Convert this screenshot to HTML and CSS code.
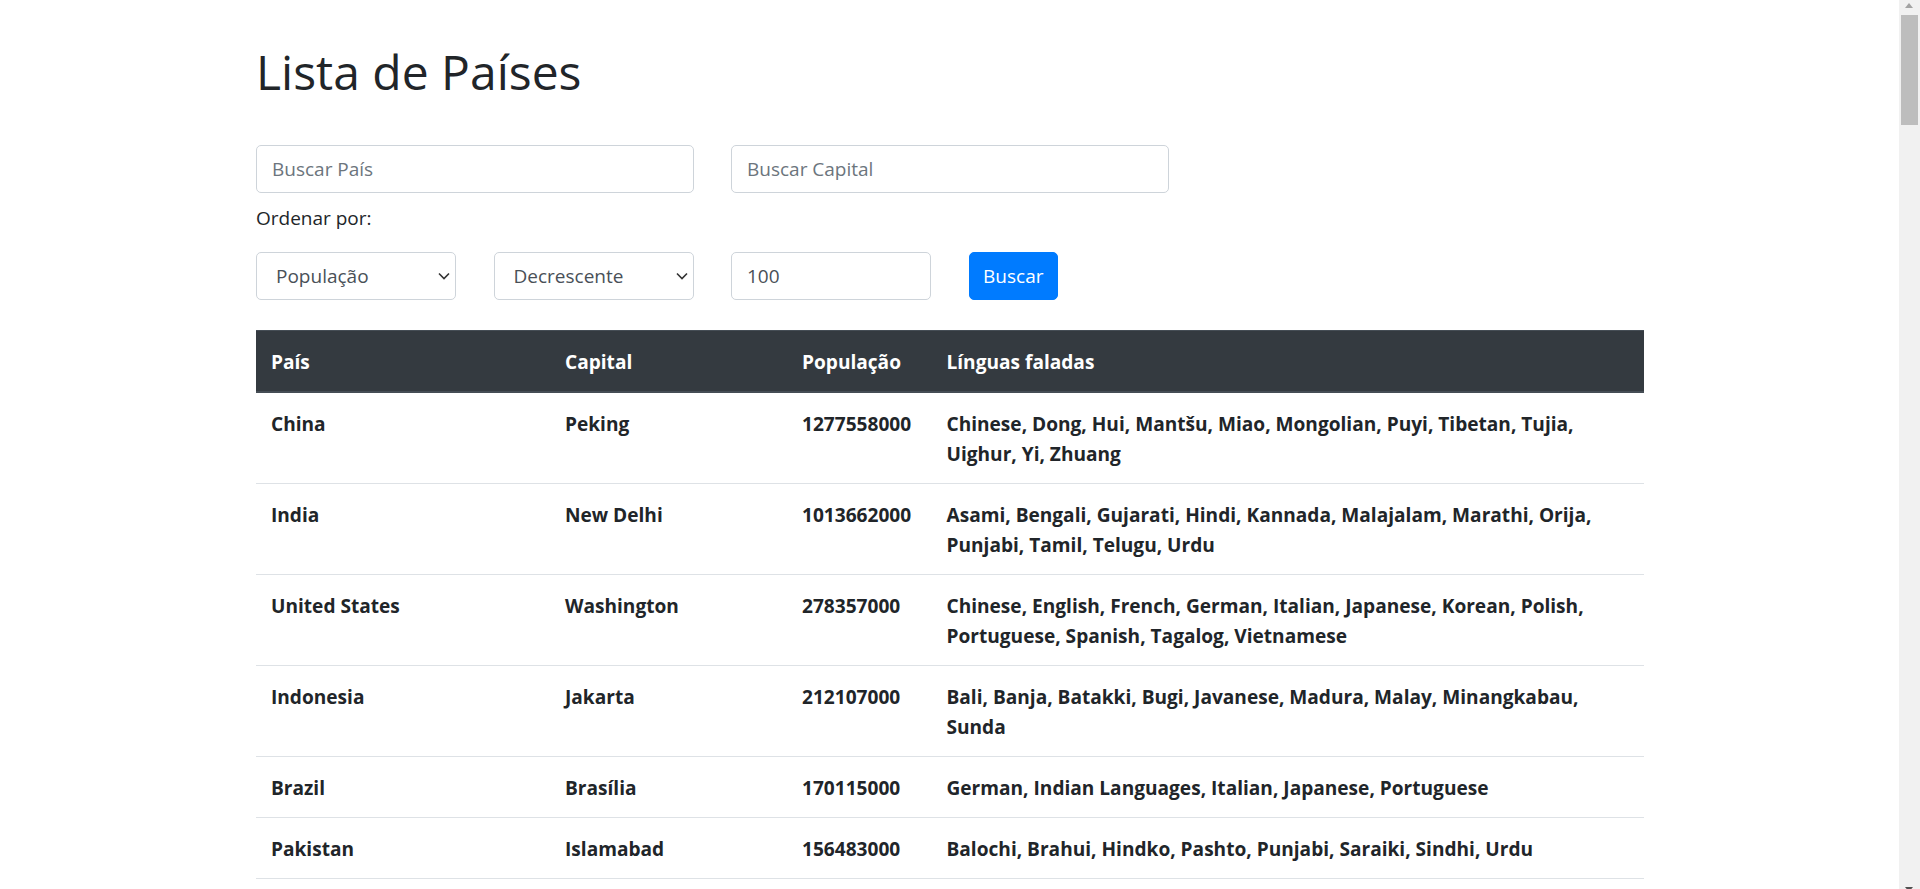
FILE: index.html
```html
<!DOCTYPE html>
<html lang="pt">
<head>
<meta charset="utf-8">
<title>Lista de Países</title>
<link rel="stylesheet" href="styles.css">
</head>
<body>
<div class="container">
  <h1 class="title">Lista de Países</h1>
  <div class="row row-search">
    <div class="col col-4"><input class="form-control" type="text" placeholder="Buscar País"></div>
    <div class="col col-4"><input class="form-control" type="text" placeholder="Buscar Capital"></div>
  </div>
  <label class="order-label">Ordenar por:</label>
  <div class="row row-order">
    <div class="col col-2">
      <div class="select-wrap">
        <select class="form-control form-select"><option>População</option></select>
        <svg class="chev" width="12" height="8" viewBox="0 0 12 8"><path d="M1 1.5 L6 6.5 L11 1.5" fill="none" stroke="#333" stroke-width="1.6"/></svg>
      </div>
    </div>
    <div class="col col-2">
      <div class="select-wrap">
        <select class="form-control form-select"><option>Decrescente</option></select>
        <svg class="chev" width="12" height="8" viewBox="0 0 12 8"><path d="M1 1.5 L6 6.5 L11 1.5" fill="none" stroke="#333" stroke-width="1.6"/></svg>
      </div>
    </div>
    <div class="col col-2"><input class="form-control" type="number" value="100"></div>
    <div class="col col-2"><button class="btn">Buscar</button></div>
  </div>
  <table class="table">
    <colgroup>
      <col class="c1"><col class="c2"><col class="c3"><col class="c4">
    </colgroup>
    <thead>
      <tr><th>País</th><th>Capital</th><th>População</th><th class="langs">Línguas faladas</th></tr>
    </thead>
    <tbody>
      <tr><td>China</td><td>Peking</td><td>1277558000</td><td class="langs">Chinese, Dong, Hui, Mantšu, Miao, Mongolian, Puyi, Tibetan, Tujia, Uighur, Yi, Zhuang</td></tr>
      <tr><td>India</td><td>New Delhi</td><td>1013662000</td><td class="langs">Asami, Bengali, Gujarati, Hindi, Kannada, Malajalam, Marathi, Orija, Punjabi, Tamil, Telugu, Urdu</td></tr>
      <tr><td>United States</td><td>Washington</td><td>278357000</td><td class="langs">Chinese, English, French, German, Italian, Japanese, Korean, Polish, Portuguese, Spanish, Tagalog, Vietnamese</td></tr>
      <tr><td>Indonesia</td><td>Jakarta</td><td>212107000</td><td class="langs">Bali, Banja, Batakki, Bugi, Javanese, Madura, Malay, Minangkabau, Sunda</td></tr>
      <tr><td>Brazil</td><td>Brasília</td><td>170115000</td><td class="langs">German, Indian Languages, Italian, Japanese, Portuguese</td></tr>
      <tr><td>Pakistan</td><td>Islamabad</td><td>156483000</td><td class="langs">Balochi, Brahui, Hindko, Pashto, Punjabi, Saraiki, Sindhi, Urdu</td></tr>
    </tbody>
  </table>
</div>
<div class="scrollbar">
  <span class="sb-up"></span>
  <span class="sb-thumb"></span>
  <span class="sb-down"></span>
</div>
</body>
</html>
```
FILE: styles.css
```css
html, body {
  margin: 0;
  padding: 0;
  background: #fff;
}
body {
  font-family: "Open Sans", "Noto Sans", sans-serif;
  font-size: 19px;
  line-height: 30px;
  color: #212529;
}
.container {
  margin-left: 256px;
  width: 1387.5px;
  padding-top: 42px;
}
.title {
  margin: 0 0 43px;
  font-size: 48px;
  font-weight: 500;
  line-height: 60px;
  color: #212529;
}
.row {
  display: flex;
  gap: 37.5px;
}
.col-4 { width: 437.5px; }
.col-2 { width: 200px; }
.row-search { margin-bottom: 10px; }
.order-label {
  display: block;
  margin-bottom: 19.5px;
}
.row-order { margin-bottom: 30.5px; }
.form-control {
  display: block;
  box-sizing: border-box;
  width: 100%;
  height: 47.5px;
  margin: 0;
  padding: 9px 15px;
  font-family: "Open Sans", "Noto Sans", sans-serif;
  font-size: 19px;
  line-height: 28px;
  color: #495057;
  background: #fff;
  border: 1px solid #ced4da;
  border-radius: 5px;
  outline: none;
}
.form-control::placeholder { color: #6c757d; opacity: 1; }
input[type=number]::-webkit-inner-spin-button,
input[type=number]::-webkit-outer-spin-button { -webkit-appearance: none; margin: 0; }
input[type=number] { -moz-appearance: textfield; }
.select-wrap { position: relative; }
.form-select {
  -webkit-appearance: none;
  appearance: none;
  padding-left: 19px;
  padding-right: 30px;
}
.chev {
  position: absolute;
  right: 6px;
  top: 20px;
  pointer-events: none;
}
.btn {
  box-sizing: border-box;
  height: 47.5px;
  width: 89.5px;
  padding: 0;
  font-family: "Open Sans", "Noto Sans", sans-serif;
  font-size: 19px;
  color: #fff;
  background: #007bff;
  border: 1px solid #007bff;
  border-radius: 5px;
}
.table {
  width: 1387.5px;
  border-collapse: collapse;
  table-layout: fixed;
  font-size: 19.1px;
  font-weight: 700;
  line-height: 30px;
  border-bottom: 1px solid #dee2e6;
}
.c1 { width: 294px; }
.c2 { width: 237px; }
.c3 { width: 144.5px; }
.c4 { width: 712px; }
.table th, .table td {
  padding: 15px;
  padding-top: 16px;
  padding-bottom: 14px;
  text-align: left;
  vertical-align: top;
  border-top: 1px solid #dee2e6;
}
.table .langs { padding-right: 40px; }
.table thead th {
  background: #343a40;
  color: #fff;
  border-top-color: #454d55;
  border-bottom: 2px solid #454d55;
}
.table td { color: #212529; }

/* window scrollbar drawn over the page edge */
.scrollbar {
  position: fixed;
  top: 0;
  right: 0;
  width: 21px;
  height: 100vh;
  background: #f1f1f1;
}
.sb-up {
  position: absolute;
  top: 3px;
  left: 6px;
  width: 0;
  height: 0;
  border-left: 4.5px solid transparent;
  border-right: 4.5px solid transparent;
  border-bottom: 5px solid #a3a3a3;
}
.sb-thumb {
  position: absolute;
  top: 15px;
  left: 2px;
  width: 17px;
  height: 110px;
  background: #bdbdbd;
}
.sb-down {
  position: absolute;
  bottom: -3px;
  left: 6px;
  width: 0;
  height: 0;
  border-left: 4.5px solid transparent;
  border-right: 4.5px solid transparent;
  border-top: 5px solid #505050;
}
```
